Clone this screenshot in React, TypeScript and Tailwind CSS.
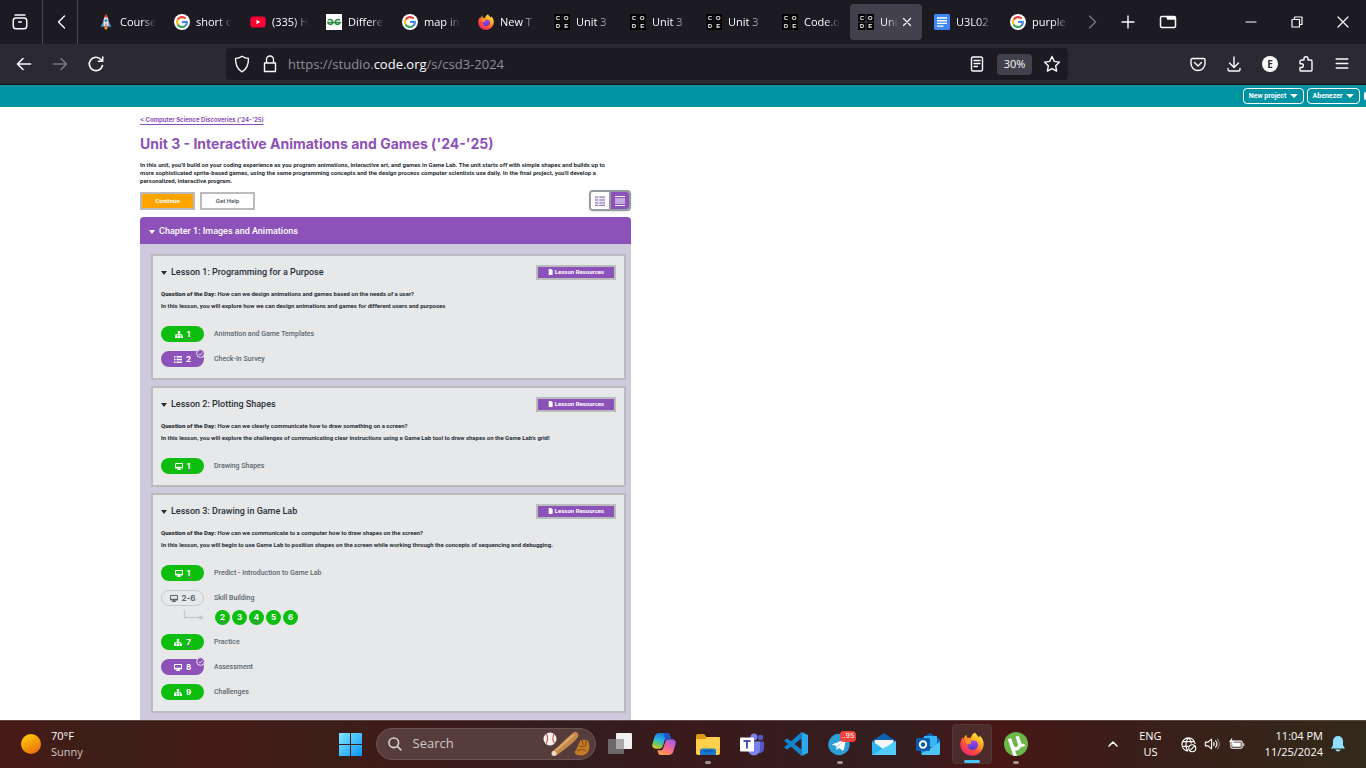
import React, { useState } from "react";

type IconProps = { className?: string };
type Kind = "tree" | "screen" | "list";
type Level = {
  kind: Kind;
  label: string;
  title: string;
  tone?: "green" | "purple" | "outline";
  underlined?: boolean;
  checked?: boolean;
  children?: { n: number; underlined?: boolean }[];
};
type Lesson = { title: string; question: string; summary: string; levels: Level[] };

const lessons: Lesson[] = [
  {
    title: "Lesson 1: Programming for a Purpose",
    question: "How can we design animations and games based on the needs of a user?",
    summary: "In this lesson, you will explore how we can design animations and games for different users and purposes",
    levels: [
      { kind: "tree", label: "1", title: "Animation and Game Templates", underlined: true },
      { kind: "list", label: "2", title: "Check-In Survey", tone: "purple", checked: true },
    ],
  },
  {
    title: "Lesson 2: Plotting Shapes",
    question: "How can we clearly communicate how to draw something on a screen?",
    summary:
      "In this lesson, you will explore the challenges of communicating clear instructions using a Game Lab tool to draw shapes on the Game Lab's grid!",
    levels: [{ kind: "screen", label: "1", title: "Drawing Shapes", underlined: true }],
  },
  {
    title: "Lesson 3: Drawing in Game Lab",
    question: "How can we communicate to a computer how to draw shapes on the screen?",
    summary:
      "In this lesson, you will begin to use Game Lab to position shapes on the screen while working through the concepts of sequencing and debugging.",
    levels: [
      { kind: "screen", label: "1", title: "Predict - Introduction to Game Lab", underlined: true },
      {
        kind: "screen",
        label: "2-6",
        title: "Skill Building",
        tone: "outline",
        children: [{ n: 2, underlined: true }, { n: 3 }, { n: 4, underlined: true }, { n: 5 }, { n: 6 }],
      },
      { kind: "tree", label: "7", title: "Practice", underlined: true },
      { kind: "screen", label: "8", title: "Assessment", tone: "purple", checked: true },
      { kind: "tree", label: "9", title: "Challenges" },
    ],
  },
];

/* ---------- favicons ---------- */

const Google = () => (
  <svg viewBox="0 0 16 16" className="size-4 shrink-0">
    <circle cx="8" cy="8" r="8" fill="#fff" />
    <g fill="none" strokeWidth="2.1">
      <path d="M11.6 4.6A5 5 0 0 0 3.7 5.6" stroke="#ea4335" />
      <path d="M3.7 5.5a5 5 0 0 0 0 5" stroke="#fbbc05" />
      <path d="M3.6 10.4a5 5 0 0 0 7.7 1.3" stroke="#34a853" />
      <path d="M8 8h4.9a5 5 0 0 1-1.7 3.8" stroke="#4285f4" />
    </g>
  </svg>
);

const Rocket = () => (
  <svg viewBox="0 0 16 16" className="size-4 shrink-0">
    <path d="M8 12.5c-1.6 0-2 1-1.2 2.2L8 16l1.2-1.3c.8-1.200.4-2.200-1.200-2.200z" fill="#f9a825" />
    <path d="M5 8 3.200 11v2.800L6 12zM11 8l1.800 3v2.800L10 12z" fill="#3f87c5" />
    <path d="M8 1C5.500 3.500 5 7 5.500 12.500h5C11 7 10.500 3.500 8 1z" fill="#dfe6ec" />
    <path d="M8 0C7 1 6.400 2.200 6 3.500h4C9.600 2.200 9 1 8 0z" fill="#d84534" />
    <circle cx="8" cy="6.500" r="1.500" fill="#3f87c5" />
    <path d="M7.500 9.500h1v4h-1z" fill="#d84534" />
  </svg>
);

const YouTube = () => (
  <svg viewBox="0 0 16 16" className="size-4 shrink-0">
    <rect x="0.300" y="2.500" width="15.400" height="11" rx="3" fill="#ff0033" />
    <path d="M6.500 5.700v4.600L10.300 8z" fill="#fff" />
  </svg>
);

const Geeks = () => (
  <svg viewBox="0 0 16 16" className="size-4 shrink-0">
    <rect width="16" height="16" fill="#fff" />
    <g fill="none" stroke="#2f8d46" strokeWidth="1.500">
      <path d="M2 6.200c2-1.500 4.800-.3 4.800 2.100 0 2.700-4.300 2.900-5 .2H14.200c-.7 2.700-5 2.500-5-.2 0-2.400 2.800-3.600 4.800-2.100" />
    </g>
  </svg>
);

const Docs = () => (
  <svg viewBox="0 0 16 16" className="size-4 shrink-0">
    <rect width="16" height="16" rx="1.500" fill="#4285f4" />
    <path d="M3 4h10M3 6.700h10M3 9.400h10M3 12.100h6.500" stroke="#fff" strokeWidth="1.400" />
  </svg>
);

const CodeOrg = () => (
  <svg viewBox="0 0 16 16" className="size-4 shrink-0">
    <path d="M0 0h7.500v7.500H0zM8.500 0H16v7.500H8.500zM0 8.500h7.500V16H0zM8.500 8.500H16V16H8.500z" fill="#000" />
    <g fill="#f4f4f4" fontFamily="Liberation Sans, sans-serif" fontWeight="bold" fontSize="6" textAnchor="middle">
      <text x="3.800" y="5.900">C</text>
      <text x="12.200" y="5.900">O</text>
      <text x="3.800" y="14.200">D</text>
      <text x="12.200" y="14.200">E</text>
    </g>
  </svg>
);

const Firefox = ({ className = "size-4 shrink-0" }: IconProps) => (
  <svg viewBox="0 0 24 24" className={className}>
    <defs>
      <linearGradient id="fx-body" x1="0.900" y1="0" x2="0.200" y2="1">
        <stop offset="0" stopColor="#fff44f" />
        <stop offset="0.350" stopColor="#ffb01f" />
        <stop offset="0.650" stopColor="#ff4f3a" />
        <stop offset="1" stopColor="#f0227a" />
      </linearGradient>
      <linearGradient id="fx-globe" x1="0.500" y1="0" x2="0.500" y2="1">
        <stop offset="0" stopColor="#a04df0" />
        <stop offset="1" stopColor="#5a35c8" />
      </linearGradient>
    </defs>
    <path
      d="M15 .5c1 2 2.800 3.200 4 4.800.6-.2.700-1 .6-1.800C22.500 6 24 9.300 23.600 13c-.6 6-5.500 10.700-11.600 10.700S.600 19 .400 13C.300 9.800 1.200 7.300 2.800 5.300l.5 2c.7-2 1.800-3.600 3.200-4.500-.1 1.500.4 2.500 1.300 3.100 1-.2 2-.1 2.900.1C11.300 3.600 12.800 1.800 15 .5z"
      fill="url(#fx-body)"
    />
    <path
      d="M7.300 8.500c1.500-.6 3-.3 4.200.7 1-.9 3-1 4.600-.1 2.300 1.600 2.600 5 .6 7.200-2.500 2.700-7.400 2.200-9-1.200-.6-1.500-.3-2.800.2-3.500 1.200 1 2.600.6 3.700-.2-1.600-.2-2.900-1.500-4.300-2.900z"
      fill="url(#fx-globe)"
    />
    <path d="M5.200 7.300c2.500-.5 4.300.8 6 2.200-.8 1.600-2.700 1.900-3.900 3-1.200-1.500-2.400-3.400-2.100-5.200z" fill="#ff9a1f" />
  </svg>
);

/* ---------- browser chrome ---------- */

const Line = ({ d, className = "size-5", w = 1.4 }: { d: string; className?: string; w?: number }) => (
  <svg viewBox="0 0 20 20" className={className} fill="none" stroke="currentColor" strokeWidth={w} strokeLinecap="round" strokeLinejoin="round">
    <path d={d} />
  </svg>
);

const tabs: { icon: () => React.ReactElement; text: string; active?: boolean }[] = [
  { icon: Rocket, text: "Course" },
  { icon: Google, text: "short c" },
  { icon: YouTube, text: "(335) H" },
  { icon: Geeks, text: "Differe" },
  { icon: Google, text: "map in" },
  { icon: () => <Firefox />, text: "New T" },
  { icon: CodeOrg, text: "Unit 3" },
  { icon: CodeOrg, text: "Unit 3" },
  { icon: CodeOrg, text: "Unit 3" },
  { icon: CodeOrg, text: "Code.o" },
  { icon: CodeOrg, text: "Uni", active: true },
  { icon: Docs, text: "U3L02" },
  { icon: Google, text: "purple" },
];

function TabStrip() {
  return (
    <div className="flex h-11 shrink-0 items-center bg-[#1c1b22] text-[#fbfbfe]">
      <button aria-label="Firefox View" className="flex h-full w-[43px] items-center justify-center border-r border-[#4a4950] pr-0.5">
        <Line d="M4.500 2.200h11M2.500 8.500a3 3 0 0 1 3-3h9a3 3 0 0 1 3 3v6a3 3 0 0 1-3 3h-9a3 3 0 0 1-3-3zM8.500 10h3" w={1.6} className="size-[18px]" />
      </button>
      <button aria-label="Scroll tabs left" className="flex h-full w-[35px] items-center justify-center border-r border-[#4a4950] pl-1">
        <Line d="M12.500 4 6.500 10l6 6" w={1.4} />
      </button>
      <div role="tablist" className="ml-3 flex gap-1">
        {tabs.map((t, i) => (
          <button
            key={i}
            role="tab"
            aria-selected={!!t.active}
            className={
              t.active
                ? "flex h-9 w-[72px] items-center gap-1.5 rounded bg-[#42414d] pl-2"
                : "flex h-9 w-[72px] items-center gap-1.5 rounded pl-2"
            }
          >
            <t.icon />
            <span
              className={
                t.active
                  ? "w-[18px] text-left text-[11px] whitespace-nowrap [mask-image:linear-gradient(to_right,black_40%,transparent)]"
                  : "w-9 text-left text-[11px] whitespace-nowrap [mask-image:linear-gradient(to_right,black_60%,transparent)]"
              }
            >
              {t.text}
            </span>
            {t.active && <Line d="M5 5l10 10M15 5 5 15" className="-ml-1 size-3.5 shrink-0" w={1.7} />}
          </button>
        ))}
      </div>
      <button aria-label="Scroll tabs right" className="flex w-8 justify-center pl-1 text-[#77767d]">
        <Line d="M7.500 4l6 6-6 6" />
      </button>
      <button aria-label="New tab" className="ml-1 flex w-9 justify-center">
        <Line d="M10 4v12M4 10h12" />
      </button>
      <button aria-label="List all tabs" className="ml-1 flex w-9 justify-center">
        <svg viewBox="0 0 18 14" className="h-3.5 w-[18px]">
          <rect x="1.500" y="1.500" width="15" height="11" rx="1.500" fill="none" stroke="currentColor" strokeWidth="1.500" />
          <path d="M7 1.500h9.500v3.200H8.200z" fill="currentColor" />
        </svg>
      </button>
      <div className="ml-auto flex">
        <button aria-label="Minimize" className="flex w-[46px] justify-center">
          <Line d="M5 10h10" w={1.200} />
        </button>
        <button aria-label="Restore" className="flex w-[46px] justify-center">
          <Line d="M5 7.500h7.500V15H5zM7.500 7V5H15v7.500h-2" w={1.200} />
        </button>
        <button aria-label="Close" className="flex w-[46px] justify-center">
          <Line d="M5 5l10 10M15 5 5 15" w={1.200} />
        </button>
      </div>
    </div>
  );
}

function NavBar() {
  return (
    <div className="flex h-[41px] shrink-0 items-center border-b border-[#0c0c0d] bg-[#2b2a33] px-1.5 text-[#fbfbfe]">
      <button aria-label="Back" className="flex w-9 justify-center">
        <Line d="M16.500 10H3.500M9 4.500 3.500 10 9 15.500" w={1.6} />
      </button>
      <button aria-label="Forward" className="flex w-9 justify-center text-[#77767d]">
        <Line d="M3.500 10h13M11 4.500 16.500 10 11 15.500" w={1.6} />
      </button>
      <button aria-label="Reload" className="flex w-9 justify-center">
        <Line d="M16.500 11.500A6.700 6.700 0 1 1 15 5.500l1.500 1.500M16.700 3v4.300h-4.300" w={1.6} />
      </button>
      <div className="ml-28 flex h-8 min-w-0 flex-1 items-center rounded bg-[#1c1b22] pr-1.5 pl-1.5">
        <Line d="M10 2.200c2 1.500 4.200 2.200 6.500 2.200 0 5.800-1.800 10.800-6.500 13.400C5.300 15.200 3.500 10.200 3.500 4.400 5.800 4.400 8 3.700 10 2.200z" />
        <span className="ml-2">
          <Line d="M4.500 9h11v8.500h-11zM6.500 9V5.500a3.500 3.500 0 0 1 7 0V9" />
        </span>
        <span className="ml-2 flex-1 pt-0.5 text-[13px] whitespace-nowrap text-[#8f8f98]">
          https://studio.<span className="text-[#fbfbfe]">code.org</span>/s/csd3-2024
        </span>
        <button aria-label="Reader view">
          <Line d="M6 3h8a1.500 1.500 0 0 1 1.500 1.500v11A1.500 1.500 0 0 1 14 17H6a1.500 1.500 0 0 1-1.500-1.500v-11A1.500 1.500 0 0 1 6 3zM7 6.500h6M7 9.500h6M7 12.500h3.500" />
        </button>
        <button className="mx-2.5 h-[21px] w-[35px] rounded-sm bg-[#42414d] text-[11px]">30%</button>
        <button aria-label="Bookmark">
          <Line d="M10 2.500l2.300 4.900 5.200.7-3.800 3.700.9 5.300L10 14.600l-4.600 2.500.9-5.300L2.500 8.100l5.200-.7z" />
        </button>
      </div>
      <div className="ml-28 flex">
        <button aria-label="Pocket" className="flex w-9 justify-center">
          <Line d="M4.500 4.500h11a1.500 1.500 0 0 1 1.500 1.500v3.500a7 7 0 0 1-14 0V6a1.500 1.500 0 0 1 1.500-1.500zM6.500 8.500 10 12l3.500-3.500" />
        </button>
        <button aria-label="Downloads" className="flex w-9 justify-center">
          <Line d="M10 3v10M5.500 9l4.500 4.500L14.500 9M4 14.500v1A1.500 1.500 0 0 0 5.500 17h9a1.500 1.500 0 0 0 1.500-1.500v-1" />
        </button>
        <button aria-label="Account" className="flex w-9 items-center justify-center">
          <span className="flex size-4 items-center justify-center rounded-full bg-[#fbfbfe] text-[10px] font-bold text-[#2b2a33]">E</span>
        </button>
        <button aria-label="Extensions" className="flex w-9 justify-center">
          <Line d="M8 6V4.700a2 2 0 0 1 4 0V6h2.500A1.500 1.500 0 0 1 16 7.500V16a1 1 0 0 1-1 1H5a1 1 0 0 1-1-1v-2.500h1.500a1.900 1.900 0 0 0 0-3.800H4V7.500A1.500 1.500 0 0 1 5.500 6z" />
        </button>
        <button aria-label="Menu" className="flex w-9 justify-center">
          <Line d="M4.200 5h11.600M4.200 9.500h11.600M4.200 14h11.600" />
        </button>
      </div>
    </div>
  );
}

/* ---------- course page ---------- */

const KindIcon = ({ kind }: { kind: Kind }) => (
  <svg viewBox="0 0 16 14" className="h-[7px] w-2" fill="currentColor" aria-hidden="true">
    {kind === "tree" && <path d="M5.500 0h5v5H9v1.500h5V9h2v5h-4.500V9H13V8H9v1h1.500v5h-5V9H7V8H3v1h1.500v5H0V9h1V6.500h6V5H5.500z" />}
    {kind === "screen" && (
      <path fillRule="evenodd" d="M1.500 0h13A1.500 1.500 0 0 1 16 1.500v8a1.500 1.500 0 0 1-1.500 1.500H10l1 1.500h1V14H4v-1.500h1L6 11H1.500A1.500 1.500 0 0 1 0 9.500v-8A1.500 1.500 0 0 1 1.500 0zM2 2v5.500h12V2z" />
    )}
    {kind === "list" && <path d="M0 0h3v3H0zM5 0h11v3H5zM0 5.500h3v3H0zM5 5.500h11v3H5zM0 11h3v3H0zM5 11h11v3H5z" />}
  </svg>
);

const Caret = ({ className = "w-1.5" }: IconProps) => (
  <svg viewBox="0 0 6 4" preserveAspectRatio="none" className={"h-1 shrink-0 " + className} fill="currentColor" aria-hidden="true">
    <path d="M0 0h6L3 4z" />
  </svg>
);

const mark = "underline decoration-[#8c52ba] decoration-1 underline-offset-1";

function Pill({ level }: { level: Level }) {
  const tone =
    level.tone === "purple"
      ? "bg-[#8c52ba] text-white"
      : level.tone === "outline"
        ? "border border-[#c6cacd] text-[#5b6770]"
        : "bg-[#0ebe0e] text-white";
  return (
    <a href="#level" className={"relative flex h-4 w-[43px] shrink-0 items-center justify-center gap-1 rounded-full " + tone}>
      <KindIcon kind={level.kind} />
      <span className={"text-[8px] leading-none font-bold " + (level.underlined ? mark : "")}>{level.label}</span>
      {level.checked && (
        <svg viewBox="0 0 9 9" className="absolute -top-0.5 -right-px size-[9px]">
          <circle cx="4.500" cy="4.500" r="3.900" fill="#8c52ba" stroke="#e7e8ea" strokeWidth="1" />
          <path d="M2.800 4.800 4 6l2.500-2.600" stroke="#e7e8ea" strokeWidth="0.900" fill="none" />
        </svg>
      )}
    </a>
  );
}

function LevelRow({ level }: { level: Level }) {
  return (
    <li>
      <div className="flex items-center gap-2.5">
        <Pill level={level} />
        <a href="#level" className="font-[Roboto,sans-serif] text-[7px] leading-4 font-medium text-[#5b6770]">
          {level.title}
        </a>
      </div>
      {level.children && (
        <div className="mt-[3px] flex items-center">
          <svg viewBox="0 0 54 16" className="h-4 w-[54px]" fill="none">
            <path d="M23.500 1v7.500H39" stroke="#c6cacd" strokeWidth="1.400" />
            <circle cx="40" cy="8.500" r="2" fill="#c6cacd" />
          </svg>
          <div className="flex gap-0.5">
            {level.children.map((c) => (
              <a
                key={c.n}
                href="#level"
                className="flex size-[15px] items-center justify-center rounded-full bg-[#0ebe0e] text-[8px] leading-none font-bold text-white"
              >
                <span className={c.underlined ? mark : ""}>{c.n}</span>
              </a>
            ))}
          </div>
        </div>
      )}
    </li>
  );
}

function LessonCard({ lesson }: { lesson: Lesson }) {
  return (
    <section className="border-2 border-[#bbbbbd] bg-[#e7e8ea] px-2 pt-2 pb-[11px] text-[#292f36]">
      <div className="flex h-4 items-center justify-between">
        <h3 className="flex items-center gap-1 pt-0.5 font-[Roboto,sans-serif] text-[9px] font-medium">
          <Caret />
          {lesson.title}
        </h3>
        <button className="flex h-[15px] w-20 items-center justify-center gap-0.5 border-2 border-[#bbbbbd] bg-[#8c52ba] font-[Roboto,sans-serif] text-[6px] leading-none font-bold text-white">
          <svg viewBox="0 0 8 10" className="h-1.5 w-[5px]" fill="currentColor" aria-hidden="true">
            <path d="M1 0h4l2.500 2.500V10H1z" />
          </svg>
          Lesson Resources
        </button>
      </div>
      <div className="mt-2 font-[Roboto,sans-serif] text-[6px] leading-3 font-bold whitespace-nowrap">
        <p>
          <strong>Question of the Day:</strong> {lesson.question}
        </p>
        <p>{lesson.summary}</p>
      </div>
      <ul className="mt-3.5 flex flex-col gap-[9px]">
        {lesson.levels.map((l) => (
          <LevelRow key={l.label} level={l} />
        ))}
      </ul>
    </section>
  );
}

function CoursePage() {
  const [view, setView] = useState("detail");
  return (
    <div className="min-h-0 flex-1 overflow-hidden bg-white font-[Inter,sans-serif]">
      <header className="flex h-[22px] items-center justify-end gap-[3px] bg-[#0093a4] font-[Roboto,sans-serif] text-[7px] leading-none font-bold text-white">
        <button className="flex h-4 w-[61px] items-center justify-center gap-1 rounded-sm border border-white">
          New project <Caret className="w-2" />
        </button>
        <button className="flex h-4 w-[53px] items-center justify-center gap-1 rounded-sm border border-white">
          Abenezer <Caret className="w-2" />
        </button>
        <button aria-label="Help" className="ml-px h-2 w-0.5 rounded-l-full bg-white" />
      </header>
      <main className="ml-[140px] w-[491px]">
        <a href="#course" className="mt-2 block w-fit text-[6px] leading-[10px] font-bold text-[#8c52ba] underline underline-offset-2">
          &lt; Computer Science Discoveries ('24-'25)
        </a>
        <h1 className="mt-[9px] text-[14px] leading-5 font-bold text-[#8c52ba]">Unit 3 - Interactive Animations and Games ('24-'25)</h1>
        <p className="mt-[7px] mb-[5px] pr-3.5 font-[Roboto,sans-serif] text-[6px] leading-2 font-bold text-[#292f36]">
          In this unit, you'll build on your coding experience as you program animations, interactive art, and games in Game Lab. The unit starts off with simple shapes and builds up to more sophisticated sprite-based games, using the same programming concepts and the design process computer scientists use daily. In the final project, you'll develop a personalized, interactive program.
        </p>
        <div className="flex items-center gap-[5px] font-[Roboto,sans-serif] text-[6px] leading-none font-bold">
          <button className="h-[18px] w-[55px] border-2 border-[#bbbbbd] bg-[#ffa400] text-white">Continue</button>
          <button className="h-[18px] w-[55px] border-2 border-[#bbbbbd] bg-white text-[#5b6770]">Get Help</button>
          <div className="ml-auto flex h-[21px] w-[42px] overflow-hidden rounded-sm border-2 border-[#949ca2] shadow">
            <button
              aria-label="Summary view"
              aria-pressed={view === "summary"}
              onClick={() => setView("summary")}
              className="flex flex-1 items-center justify-center border-r-2 border-[#949ca2] bg-white"
            >
              <svg viewBox="0 0 10 10" className="size-2.5">
                <path d="M0 0h4v10H0zM5 0h5v10H5z" fill="#e6dff0" />
                <path d="M0 1h3M4 1h6M0 4h3M4 4h6M0 7h3M4 7h6M0 9.500h3M4 9.500h6" stroke="#8c74b5" strokeWidth="1" />
              </svg>
            </button>
            <button
              aria-label="Detail view"
              aria-pressed={view === "detail"}
              onClick={() => setView("detail")}
              className="flex flex-1 items-center justify-center bg-[#8c52ba]"
            >
              <svg viewBox="0 0 10 10" className="size-2.5">
                <path d="M0 2h10v6H0z" fill="#c5a9de" />
                <path d="M0 .5h10M0 9.500h10" stroke="#fff" />
              </svg>
            </button>
          </div>
        </div>
        <h2 className="mt-1.5 flex h-[27px] items-center gap-1 rounded-t bg-[#8c52ba] pt-0.5 pl-[9px] font-[Roboto,sans-serif] text-[9px] font-medium text-white">
          <Caret />
          Chapter 1: Images and Animations
        </h2>
        <div className="flex flex-col gap-1.5 bg-[#cfc9de] pt-2.5 pr-[5px] pb-10 pl-[11px]">
          {lessons.map((l) => (
            <LessonCard key={l.title} lesson={l} />
          ))}
        </div>
      </main>
    </div>
  );
}

/* ---------- taskbar ---------- */

const TaskView = () => (
  <svg viewBox="0 0 24 24" className="size-6">
    <rect x="8" y="1" width="16" height="16" rx="1" fill="#f1f0f1" />
    <rect x="0" y="7" width="16" height="15" rx="1" fill="#6b6869" />
    <path d="M8 7h8v10H8z" fill="#a9a7a8" />
  </svg>
);

const Copilot = () => (
  <svg viewBox="0 0 24 24" className="size-6">
    <defs>
      <linearGradient id="cp-a" x1="0.600" y1="0" x2="0.200" y2="1">
        <stop offset="0" stopColor="#1b6fe0" />
        <stop offset="0.450" stopColor="#28b6e8" />
        <stop offset="0.750" stopColor="#6fcb5a" />
        <stop offset="1" stopColor="#f3c22f" />
      </linearGradient>
      <linearGradient id="cp-b" x1="0.800" y1="0" x2="0.300" y2="1">
        <stop offset="0" stopColor="#9a5bea" />
        <stop offset="0.500" stopColor="#f0629c" />
        <stop offset="1" stopColor="#ff9c4a" />
      </linearGradient>
    </defs>
    <path d="M7.500 1H15c1.700 0 2.500 1 3 2.600l.6 2.100h-3.100c-1.600 0-2.300.8-2.800 2.400L10.800 14c-.6 1.800-1.400 2.700-3.300 2.700H4c-3 0-4.300-2-3.600-4.700L2.600 4.700C3.400 2.200 4.700 1 7.500 1z" fill="url(#cp-a)" />
    <path d="M16.500 23H9c-1.700 0-2.500-1-3-2.600l-.6-2.100h3.100c1.600 0 2.300-.8 2.800-2.400L13.200 10c.6-1.800 1.400-2.700 3.300-2.700H20c3 0 4.300 2 3.600 4.700l-2.200 7.300c-.8 2.500-2.100 3.700-4.900 3.700z" fill="url(#cp-b)" />
    <path d="M15 1c1.700 0 2.500 1 3 2.600l1.100 3.700h-2.600c-1.500 0-2.400.6-2.900 1.700L12.300 4c-.5-1.900-.3-3 1.200-3z" fill="#2353c9" />
  </svg>
);

const Explorer = () => (
  <svg viewBox="0 0 24 24" className="size-6">
    <path d="M0 4a2 2 0 0 1 2-2h6l2.500 3H24v3H0z" fill="#dc9a14" />
    <path d="M0 7h9l2-2h11.500A1.500 1.500 0 0 1 24 6.500V21a2 2 0 0 1-2 2H2a2 2 0 0 1-2-2z" fill="#ffcf4b" />
    <path d="M4 23v-4a2.500 2.500 0 0 1 2.500-2.500h11A2.500 2.500 0 0 1 20 19v4z" fill="#1976c9" />
    <path d="M7.500 19h9" stroke="#0f5ba8" strokeWidth="1.500" />
  </svg>
);

const Teams = () => (
  <svg viewBox="0 0 24 24" className="size-6">
    <circle cx="14" cy="5" r="3.500" fill="#7b83eb" />
    <circle cx="20.500" cy="5.500" r="2.700" fill="#5059c9" />
    <path d="M16 9.500h8v7a4.500 4.500 0 0 1-6 4.300z" fill="#5059c9" />
    <path d="M8 9.500h12v8a6 6 0 0 1-12 0z" fill="#7b83eb" />
    <rect x="0" y="5.500" width="14" height="14" rx="1" fill="#fff" />
    <path d="M3.500 9h7M7 9v7.500" stroke="#4b53bc" strokeWidth="2" />
  </svg>
);

const VsCode = () => (
  <svg viewBox="0 0 24 24" className="size-6">
    <path d="M17.500 0 24 3v18l-6.500 3z" fill="#2aa7f0" />
    <path d="M17.500 0v6.500L3.300 17.600 0 15.500z" fill="#0d85cf" />
    <path d="M17.500 24v-6.500L3.300 6.400 0 8.500z" fill="#1583c7" />
  </svg>
);

const Telegram = () => (
  <span className="relative">
    <svg viewBox="0 0 24 24" className="size-6">
      <circle cx="11" cy="12.500" r="10.700" fill="#2b9fd6" />
      <path d="M3.800 12.600 17 7.200c.7-.2 1 .2.800.9l-2 9.700c-.2.800-.8.900-1.500.5L11 15.900l-2.200 2-.7-4z" fill="#fff" />
      <path d="m8.100 13.900 7.300-4.700-5.800 5.700-.8 3z" fill="#b8d9ec" />
    </svg>
    <span className="absolute -top-px -right-1 rounded-sm bg-[#f5413b] px-px font-[DejaVu_Sans,sans-serif] text-[7px] leading-[11px] text-white">..95</span>
  </span>
);

const Mail = () => (
  <svg viewBox="0 0 24 24" className="size-6">
    <path d="M0 9 12 1l12 8v3H0z" fill="#0f5fb0" />
    <path d="M2.500 8h19v9h-19z" fill="#f3f7fb" />
    <path d="M0 9l12 8.500L24 9v14H0z" fill="#2bb4ee" />
    <path d="M0 23 24 9v14z" fill="#52cdfb" />
  </svg>
);

const Outlook = () => (
  <svg viewBox="0 0 24 24" className="size-6">
    <path d="M3 8 14 1l10 6.500V13H3z" fill="#0f64b5" />
    <path d="M8 4h13v11H8z" fill="#35b5f2" />
    <path d="M24 9v12a2 2 0 0 1-2 2H7a2 2 0 0 1-2-2v-5l9 1z" fill="#1490df" />
    <path d="M5 22 24 10v11a2 2 0 0 1-2 2H7z" fill="#4cc6f4" />
    <rect x="0" y="6" width="14" height="13" rx="1.500" fill="#0a5cad" />
    <circle cx="7" cy="12.500" r="3.200" fill="none" stroke="#fff" strokeWidth="1.900" />
  </svg>
);

const Torrent = () => (
  <svg viewBox="0 0 24 24" className="size-6">
    <defs>
      <clipPath id="ut-disc">
        <circle cx="12" cy="12" r="12" />
      </clipPath>
    </defs>
    <circle cx="12" cy="12" r="12" fill="#6cb74a" />
    <g clipPath="url(#ut-disc)">
      <g transform="rotate(-18 12 12)" fill="none" stroke="#fff" strokeWidth="3.400">
        <path d="M7.500 5v21" />
        <path d="M7.500 10v2.500c0 5.500 8 5.500 8 0V5" />
        <path d="M15.500 11c0 4 2 5 4.500 4" strokeWidth="2.600" />
      </g>
    </g>
  </svg>
);

const apps: { name: string; icon: React.ReactElement; state?: "open" | "active" }[] = [
  { name: "Task view", icon: <TaskView /> },
  { name: "Copilot", icon: <Copilot /> },
  { name: "File Explorer", icon: <Explorer />, state: "open" },
  { name: "Teams", icon: <Teams /> },
  { name: "Visual Studio Code", icon: <VsCode /> },
  { name: "Telegram", icon: <Telegram />, state: "open" },
  { name: "Mail", icon: <Mail /> },
  { name: "Outlook", icon: <Outlook /> },
  { name: "Firefox", icon: <Firefox className="size-6" />, state: "active" },
  { name: "uTorrent", icon: <Torrent />, state: "open" },
];

function Taskbar() {
  return (
    <footer className="grid h-12 shrink-0 grid-cols-[1fr_auto_1fr] items-center bg-[linear-gradient(90deg,#491917_0%,#3b1f18_8%,#451a17_16%,#3c1e18_24%,#401b18_28%,#331e1f_42%,#3b1a1b_50%,#331e20_66%,#491615_72%,#3a1d19_82%,#33291a_100%)] text-white inset-shadow-[0_1px_0_#5a4644]">
      <button className="flex items-center gap-2.5 pl-[21px] text-left text-[11px] leading-4">
        <svg viewBox="0 0 20 20" className="size-5">
          <defs>
            <linearGradient id="sun" x1="0.200" y1="0" x2="0.800" y2="1">
              <stop offset="0" stopColor="#ffcf0a" />
              <stop offset="1" stopColor="#e96a0c" />
            </linearGradient>
          </defs>
          <circle cx="10" cy="10" r="10" fill="url(#sun)" />
        </svg>
        <span>
          <span className="block">70°F</span>
          <span className="block text-[#cfc4c2]">Sunny</span>
        </span>
      </button>
      <div className="flex items-center">
        <button aria-label="Start" className="flex w-11 justify-center">
          <svg viewBox="0 0 23 23" className="size-[23px]">
            <defs>
              <linearGradient id="win" x1="0" y1="0" x2="1" y2="1">
                <stop offset="0" stopColor="#7ee8ff" />
                <stop offset="1" stopColor="#0d95ff" />
              </linearGradient>
            </defs>
            <path d="M0 0h11v11H0zM12 0h11v11H12zM0 12h11v11H0zM12 12h11v11H12z" fill="url(#win)" />
          </svg>
        </button>
        <label className="mr-0.5 ml-[3px] flex h-8 w-[220px] items-center rounded-full border border-[#6a5351] bg-[#563d3b] pr-1 pl-2.5">
          <Line d="M8.500 2.500a6 6 0 1 1 0 12 6 6 0 0 1 0-12zM13 13l4.500 4.500" w={2} className="size-4 shrink-0 text-[#d9d2d1]" />
          <input aria-label="Search" placeholder="Search" className="ml-2.5 w-0 flex-1 bg-transparent text-[13px] outline-none placeholder:text-[#d0c7c6]" />
          <svg viewBox="0 0 48 26" className="h-[26px] w-12">
            <circle cx="7" cy="8" r="6.500" fill="#f6f3f1" />
            <path d="M3.500 3c1.500 3 1.500 6.500-.5 9.500M11 3c-1.500 3-1.500 6.500.5 9.500" stroke="#d8433a" strokeWidth="1.100" fill="none" />
            <path d="M9 20.500C17 15 23 7 30.500 1.500c3-1.500 6 1 4.500 4.500C30 13 22 17.500 13.500 24.500z" fill="#c58a4b" />
            <path d="M13 19C20 14 25 8 31.500 3.500" stroke="#e0ad70" strokeWidth="1.800" fill="none" />
            <circle cx="11" cy="22.500" r="2.500" fill="#ead9c4" />
            <path d="M36 12c1-3 3-4 5-3 3-1 5 1 5 4 1 3 0 6-1 8-2 3-6 4-10 3-3 0-4-3-2-5 1-2 2-4 3-7z" fill="#c67a26" />
            <path d="M36 15c2 1 5 1 7-1M39 9l1 5M43 9v5M34 20c3-2 6-2 9 0" stroke="#7d4613" strokeWidth="1" fill="none" />
          </svg>
        </label>
        {apps.map((a) => (
          <button key={a.name} aria-label={a.name} className="flex w-11 justify-center">
            <span
              className={
                a.state === "active"
                  ? "relative flex size-10 items-center justify-center rounded border border-[#523735] bg-[#4c2c2a]"
                  : "relative flex size-10 items-center justify-center"
              }
            >
              {a.icon}
              {a.state === "active" && <span className="absolute bottom-0 h-[3px] w-4 rounded-full bg-[#4cc2ff]" />}
              {a.state === "open" && <span className="absolute bottom-0 h-[3px] w-1.5 rounded-full bg-[#9d918f]" />}
            </span>
          </button>
        ))}
      </div>
      <div className="flex items-center justify-end pr-[21px] text-[11px] leading-4">
        <button aria-label="Show hidden icons" className="mr-[18px]">
          <Line d="m5 12.500 5-5 5 5" w={1.8} className="size-4" />
        </button>
        <button className="mr-[18px] text-center">
          <span className="block">ENG</span>
          <span className="block">US</span>
        </button>
        <button aria-label="Network, volume and battery" className="mr-5 flex items-center gap-[7px]">
          <svg viewBox="0 0 18 18" className="size-[17px]" fill="none" stroke="currentColor" strokeWidth="1.200">
            <path d="M16 8.500A7 7 0 1 0 8.500 16M2 6h13.500M2 11h7M9 2C5.500 5 5.500 13 8.500 16M9 2c2 1.800 2.800 4 3 6" />
            <circle cx="13" cy="13" r="3.700" />
            <path d="m10.500 15.500 5-5" />
          </svg>
          <svg viewBox="0 0 18 16" className="h-4 w-[17px]" fill="none" stroke="currentColor" strokeWidth="1.200" strokeLinejoin="round">
            <path d="M1.500 6h2.800L8 2.800v10.400L4.300 10H1.500zM10 6c1 1.200 1 2.800 0 4M12 4.200c2 2.200 2 5.400 0 7.600" />
            <path d="M14 2.500c3 3.200 3 7.800 0 11" stroke="#8a7a76" />
          </svg>
          <svg viewBox="0 0 18 14" className="h-3.5 w-[17px]" fill="none" stroke="currentColor" strokeWidth="1.200">
            <rect x="3" y="4" width="12" height="7.500" rx="1.500" />
            <path d="M4.500 5.500h9v4.500h-9zM16.200 6.300h1v3h-1zM1 5l3.500-5L4 3.500h3L3.500 8.500 4 5z" fill="currentColor" stroke="none" />
          </svg>
        </button>
        <button className="mr-2 text-right">
          <span className="block">11:04 PM</span>
          <span className="block">11/25/2024</span>
        </button>
        <button aria-label="Notifications">
          <svg viewBox="0 0 14 16" className="h-4 w-3.5" fill="#8fe0ff">
            <path d="M7 0a5 5 0 0 1 5 5v4.200l2 3.300H0l2-3.300V5a5 5 0 0 1 5-5zM4.500 13.500h5a2.500 2 0 0 1-5 0z" />
          </svg>
        </button>
      </div>
    </footer>
  );
}

export default function App() {
  return (
    <div className="flex h-screen flex-col overflow-hidden font-['Open_Sans','Noto_Sans',sans-serif]">
      <TabStrip />
      <NavBar />
      <CoursePage />
      <Taskbar />
    </div>
  );
}
